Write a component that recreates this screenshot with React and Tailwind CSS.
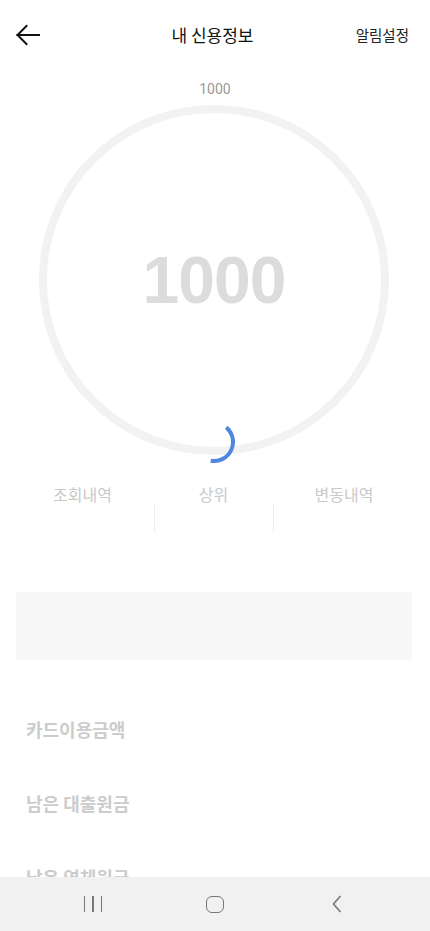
const KR = { fontFamily: '"Noto Sans CJK KR", "Noto Sans", sans-serif' }

const tabs = [
  { label: '조회내역', width: 'w-[143px]', divider: false },
  { label: '상위', width: 'w-[119px]', divider: true },
  { label: '변동내역', width: 'w-[142px]', divider: true },
]

const rows = ['카드이용금액', '남은 대출원금', '남은 연체원금']

function BackArrow() {
  return (
    <svg width="24" height="24" viewBox="0 0 24 24" fill="none" stroke="#111" strokeWidth="2" strokeLinecap="square">
      <path d="M1.5 12H24" />
      <path d="M10.5 3L1.5 12L10.5 21" strokeLinejoin="miter" />
    </svg>
  )
}

function Gauge() {
  return (
    <div className="relative ml-[39px] mt-[8px] h-[350px] w-[350px]">
      <svg width="350" height="350" viewBox="0 0 350 350" className="absolute inset-0">
        <circle cx="175" cy="175" r="171" fill="none" stroke="#f2f2f2" strokeWidth="8" />
      </svg>
      <div className="absolute inset-0 flex items-center justify-center">
        <span
          className="text-[66px] font-bold leading-none tracking-[-1px] text-[#dcdcdc]"
          style={{ fontFamily: '"Liberation Sans", Arial, sans-serif' }}
        >
          1000
        </span>
      </div>
      {/* loading spinner */}
      <svg width="44" height="44" viewBox="0 0 44 44" className="absolute left-[153px] top-[315px]">
        <path d="M34.2 7.4 A19 19 0 0 1 18.7 40.7" fill="none" stroke="#4f86e0" strokeWidth="4" />
      </svg>
    </div>
  )
}

function NavBar() {
  return (
    <div className="flex h-[54px] items-center gap-[82px] bg-[#f1f1f1] pl-[73px]">
      <div className="flex w-[40px] justify-center gap-[7px]">
        <span className="h-[16px] w-[1.5px] bg-[#777]" />
        <span className="h-[16px] w-[1.5px] bg-[#777]" />
        <span className="h-[16px] w-[1.5px] bg-[#777]" />
      </div>
      <div className="flex w-[40px] justify-center">
        <span className="h-[17px] w-[18px] rounded-[6px] border-[1.5px] border-[#777]" />
      </div>
      <div className="flex w-[40px] justify-center">
        <svg width="10" height="18" viewBox="0 0 10 18" fill="none" stroke="#777" strokeWidth="1.6">
          <path d="M8.5 1L1.5 9L8.5 17" />
        </svg>
      </div>
    </div>
  )
}

export default function App() {
  return (
    <div className="flex h-[931px] w-[430px] flex-col bg-white" style={KR}>
      <div className="h-[877px] overflow-hidden">
        <header className="grid h-[70px] grid-cols-[1fr_auto_1fr] items-center pl-4 pr-[21px]">
          <div className="flex">
            <BackArrow />
          </div>
          <h1 className="text-[17px] font-normal text-[#111]">내 신용정보</h1>
          <div className="text-right text-[14.5px] text-[#222]">알림설정</div>
        </header>

        <p
          className="mt-[11px] h-4 text-center text-[14px] leading-4 text-[#999]"
          style={{ fontFamily: 'Roboto, "Liberation Sans", sans-serif' }}
        >
          1000
        </p>

        <Gauge />

        <div className="ml-[11px] mt-[29px] flex">
          {tabs.map(tab => (
            <div key={tab.label} className={`${tab.width} flex flex-col items-center`}>
              <span className="h-5 text-[16px] leading-5 text-[#c9c9c9]">{tab.label}</span>
              <div className={`h-[28px] w-full ${tab.divider ? 'border-l border-[#eeeeee]' : ''}`} />
            </div>
          ))}
        </div>

        <div className="ml-4 mt-[60px] h-[68px] w-[396px] bg-[#f7f7f7]" />

        <div className="mt-[57px] flex flex-col gap-[50px] pl-[26px]">
          {rows.map(row => (
            <p key={row} className="h-6 text-[18px] font-semibold leading-6 text-[#cccccc]">
              {row}
            </p>
          ))}
        </div>
      </div>
      <NavBar />
    </div>
  )
}
